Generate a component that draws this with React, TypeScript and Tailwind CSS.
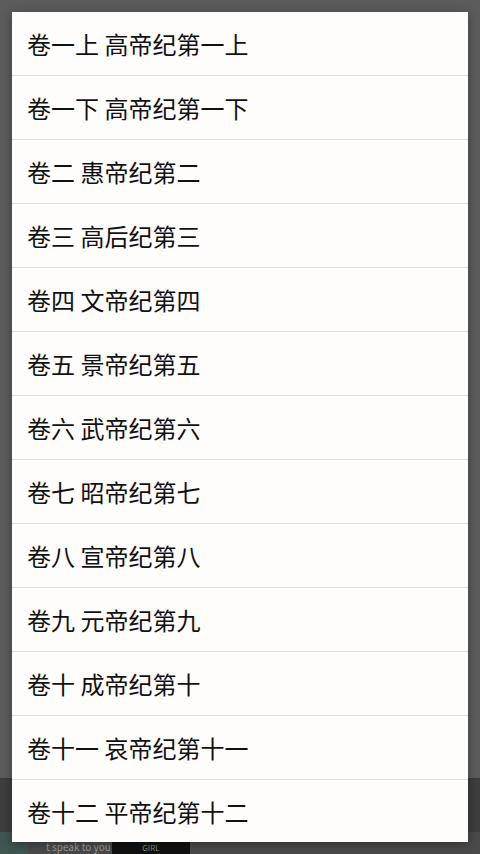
import React from 'react';

const chapters = [
  '卷一上 高帝纪第一上',
  '卷一下 高帝纪第一下',
  '卷二 惠帝纪第二',
  '卷三 高后纪第三',
  '卷四 文帝纪第四',
  '卷五 景帝纪第五',
  '卷六 武帝纪第六',
  '卷七 昭帝纪第七',
  '卷八 宣帝纪第八',
  '卷九 元帝纪第九',
  '卷十 成帝纪第十',
  '卷十一 哀帝纪第十一',
  '卷十二 平帝纪第十二',
];

export default function App() {
  return (
    <div
      className="relative w-full h-[854px] overflow-hidden bg-[#5c5c5c]"
      style={{ fontFamily: '"Noto Sans CJK SC", "Noto Sans", sans-serif' }}
    >
      {/* dimmed page behind the dialog */}
      <div className="flex flex-col h-full">
        <div className="flex-1" />
        <div className="h-[54px] bg-[#3e3e3e]" />
        <div className="h-[22px] flex items-stretch bg-[#4a4a4a] overflow-hidden">
          <div className="w-[28px] bg-[#3f5552]" />
          <div className="w-[82px] flex items-end pl-[18px] pb-[2px] text-[10px] leading-none text-[#9a9a9a] whitespace-nowrap overflow-hidden">
            t speak to you
          </div>
          <div className="w-[78px] ml-[2px] bg-[#111111] flex items-end justify-center pb-[2px] text-[8px] leading-none text-[#8a8a8a] whitespace-nowrap">
            GIRL
          </div>
          <div className="w-[18px]" />
          <div className="w-[70px] h-[10px] bg-[#6a4610]" />
          <div className="flex-1" />
          <div className="w-[64px] h-[8px] bg-[#2f3a26] mr-[48px]" />
        </div>
      </div>

      {/* chapter dialog */}
      <div className="absolute left-[12px] top-[12px] w-[456px] h-[830px] overflow-hidden bg-[#fffcfc] shadow-[0_2px_10px_rgba(0,0,0,0.35)]">
        {chapters.map((title, i) => (
          <div
            key={i}
            className={
              i === chapters.length - 1
                ? 'h-[64px] flex items-center pl-[15px] text-[24px] text-[#111111]'
                : 'h-[64px] flex items-center pl-[15px] text-[24px] text-[#111111] border-b border-[#e2dfdf]'
            }
          >
            {title}
          </div>
        ))}
      </div>
    </div>
  );
}
